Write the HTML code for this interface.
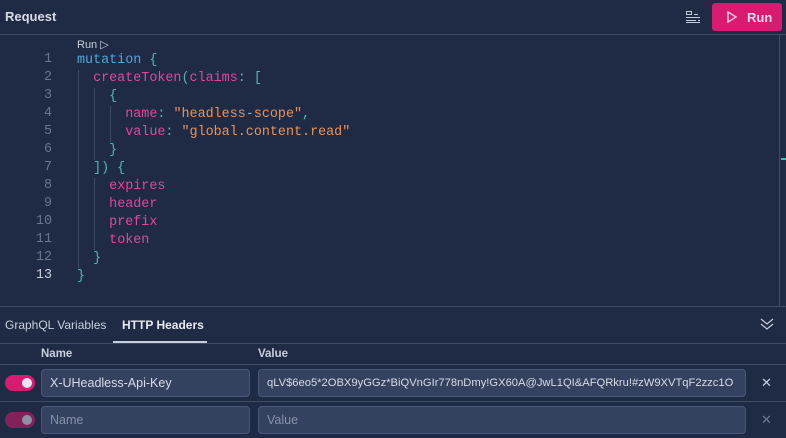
<!DOCTYPE html>
<html><head><style>
*{margin:0;padding:0;box-sizing:border-box}
body{width:786px;height:438px;background:#1f2a44;font-family:"Liberation Sans",sans-serif;color:#d6dbe6;position:relative;overflow:hidden}
.abs{position:absolute}
.code{font-family:"Liberation Mono",monospace;font-size:13.4px;line-height:18px;white-space:pre}
.ln{position:absolute;left:0;width:52px;text-align:right;color:#68778f;font-family:"Liberation Mono",monospace;font-size:13.4px}
.b{color:#4fa8dc}.p{color:#e2479e}.s{color:#e8935a}.t{color:#4fb8b0}
.inp{position:absolute;height:28px;border:1px solid #4a5878;background:#35425f;border-radius:4px;font-size:12.5px;line-height:26px;padding-left:8px;color:#d6dbe6;overflow:hidden;white-space:nowrap}
.tog{position:absolute;width:30px;height:16px;border-radius:8px;background:#d81b70}
.tog::after{content:"";position:absolute;right:3px;top:3px;width:10px;height:10px;border-radius:50%;background:#e6e6ee}
.x{position:absolute;font-size:13px;color:#c8cfdc}
.gl{position:absolute;width:1px;background:#3e4a63}
</style></head><body>
<div class="abs" style="left:5px;top:9px;font-size:13px;font-weight:bold;color:#d6dbe6">Request</div>
<div class="abs" style="left:0;top:34px;width:786px;height:1px;background:#3f4c66"></div>
<svg class="abs" style="left:686px;top:11px" width="14" height="12" viewBox="0 0 14 12"><g stroke="#c8cfdc" stroke-width="1"><path d="M0 .5h6M0 3.5h5M0 6.5h14M0 9.5h10M0 11.5h14M8 3.5h4M12 9.5h2"/><rect x=".5" y=".5" width="5" height="3" fill="none"/></g></svg>
<div class="abs" style="left:712px;top:3px;width:70px;height:28px;background:#d81b70;border-radius:3px"></div>
<svg class="abs" style="left:727px;top:11px" width="10" height="12" viewBox="0 0 10 12"><path d="M1 1L9 6L1 11Z" fill="none" stroke="#f6c4dc" stroke-width="1.5"/></svg>
<div class="abs" style="left:747px;top:10px;font-size:13px;font-weight:bold;color:#f6d6e6">Run</div>
<div class="abs" style="left:779px;top:35px;width:1px;height:271px;background:#3f4c66"></div>
<div class="abs" style="left:781px;top:158px;width:5px;height:2px;background:#4fb8b0"></div>
<div class="abs" style="left:77px;top:38px;font-size:11px;color:#c8cfdc">Run ▷</div>
<div class="gl" style="left:78px;top:70px;height:198px"></div>
<div class="gl" style="left:94px;top:88px;height:72px"></div>
<div class="gl" style="left:110px;top:106px;height:36px"></div>
<div class="gl" style="left:94px;top:178px;height:72px"></div>
<div class="abs" style="left:0;top:52px;width:780px">
<div style="position:relative">
<div class="ln" style="top:0">1</div><div class="ln" style="top:18px">2</div><div class="ln" style="top:36px">3</div><div class="ln" style="top:54px">4</div><div class="ln" style="top:72px">5</div><div class="ln" style="top:90px">6</div><div class="ln" style="top:108px">7</div><div class="ln" style="top:126px">8</div><div class="ln" style="top:144px">9</div><div class="ln" style="top:162px">10</div><div class="ln" style="top:180px">11</div><div class="ln" style="top:198px">12</div><div class="ln" style="top:216px;color:#c8cfdc">13</div>
<div class="code" style="position:absolute;left:77px;top:0"><span class="b">mutation</span> <span class="t">{</span>
  <span class="p">createToken</span><span class="t">(</span><span class="p">claims</span><span class="t">: [</span>
    <span class="t">{</span>
      <span class="p">name</span><span class="t">:</span> <span class="s">"headless-scope"</span><span class="t">,</span>
      <span class="p">value</span><span class="t">:</span> <span class="s">"global.content.read"</span>
    <span class="t">}</span>
  <span class="t">]) {</span>
    <span class="p">expires</span>
    <span class="p">header</span>
    <span class="p">prefix</span>
    <span class="p">token</span>
  <span class="t">}</span>
<span class="t">}</span></div>
</div></div>
<div class="abs" style="left:0;top:306px;width:786px;height:1px;background:#3f4c66"></div>
<div class="abs" style="left:5px;top:318px;font-size:12px;color:#c8cfdc">GraphQL Variables</div>
<div class="abs" style="left:122px;top:318px;font-size:12px;font-weight:bold;color:#e6e9f0">HTTP Headers</div>
<div class="abs" style="left:113px;top:341px;width:94px;height:2px;background:#c8cfdc"></div>
<svg class="abs" style="left:760px;top:317px" width="14" height="14" viewBox="0 0 14 14"><path d="M1 2L7 7L13 2M1 7L7 12L13 7" fill="none" stroke="#c8cfdc" stroke-width="1.2"/></svg>
<div class="abs" style="left:0;top:343px;width:786px;height:1px;background:#3f4c66"></div>
<div class="abs" style="left:41px;top:348px;font-size:11.5px;font-weight:bold;color:#c8cfdc">Name</div>
<div class="abs" style="left:258px;top:348px;font-size:11.5px;font-weight:bold;color:#c8cfdc">Value</div>
<div class="abs" style="left:0;top:364px;width:786px;height:1px;background:#3f4c66"></div>
<div class="tog" style="left:5px;top:375px"></div>
<div class="inp" style="left:41px;top:369px;width:209px">X-UHeadless-Api-Key</div>
<div class="inp" style="left:258px;top:369px;width:488px;font-size:11.2px">qLV$6eo5*2OBX9yGGz*BiQVnGIr778nDmy!GX60A@JwL1QI&amp;AFQRkru!#zW9XVTqF2zzc1O</div>
<div class="x" style="left:761px;top:375px">✕</div>
<div class="abs" style="left:0;top:401px;width:786px;height:1px;background:#3f4c66"></div>
<div class="tog" style="left:5px;top:412px;opacity:.55"></div>
<div class="inp" style="left:41px;top:406px;width:209px;color:#8792a8">Name</div>
<div class="inp" style="left:258px;top:406px;width:488px;color:#8792a8">Value</div>
<div class="x" style="left:761px;top:412px;color:#6f7a90">✕</div>
</body></html>
